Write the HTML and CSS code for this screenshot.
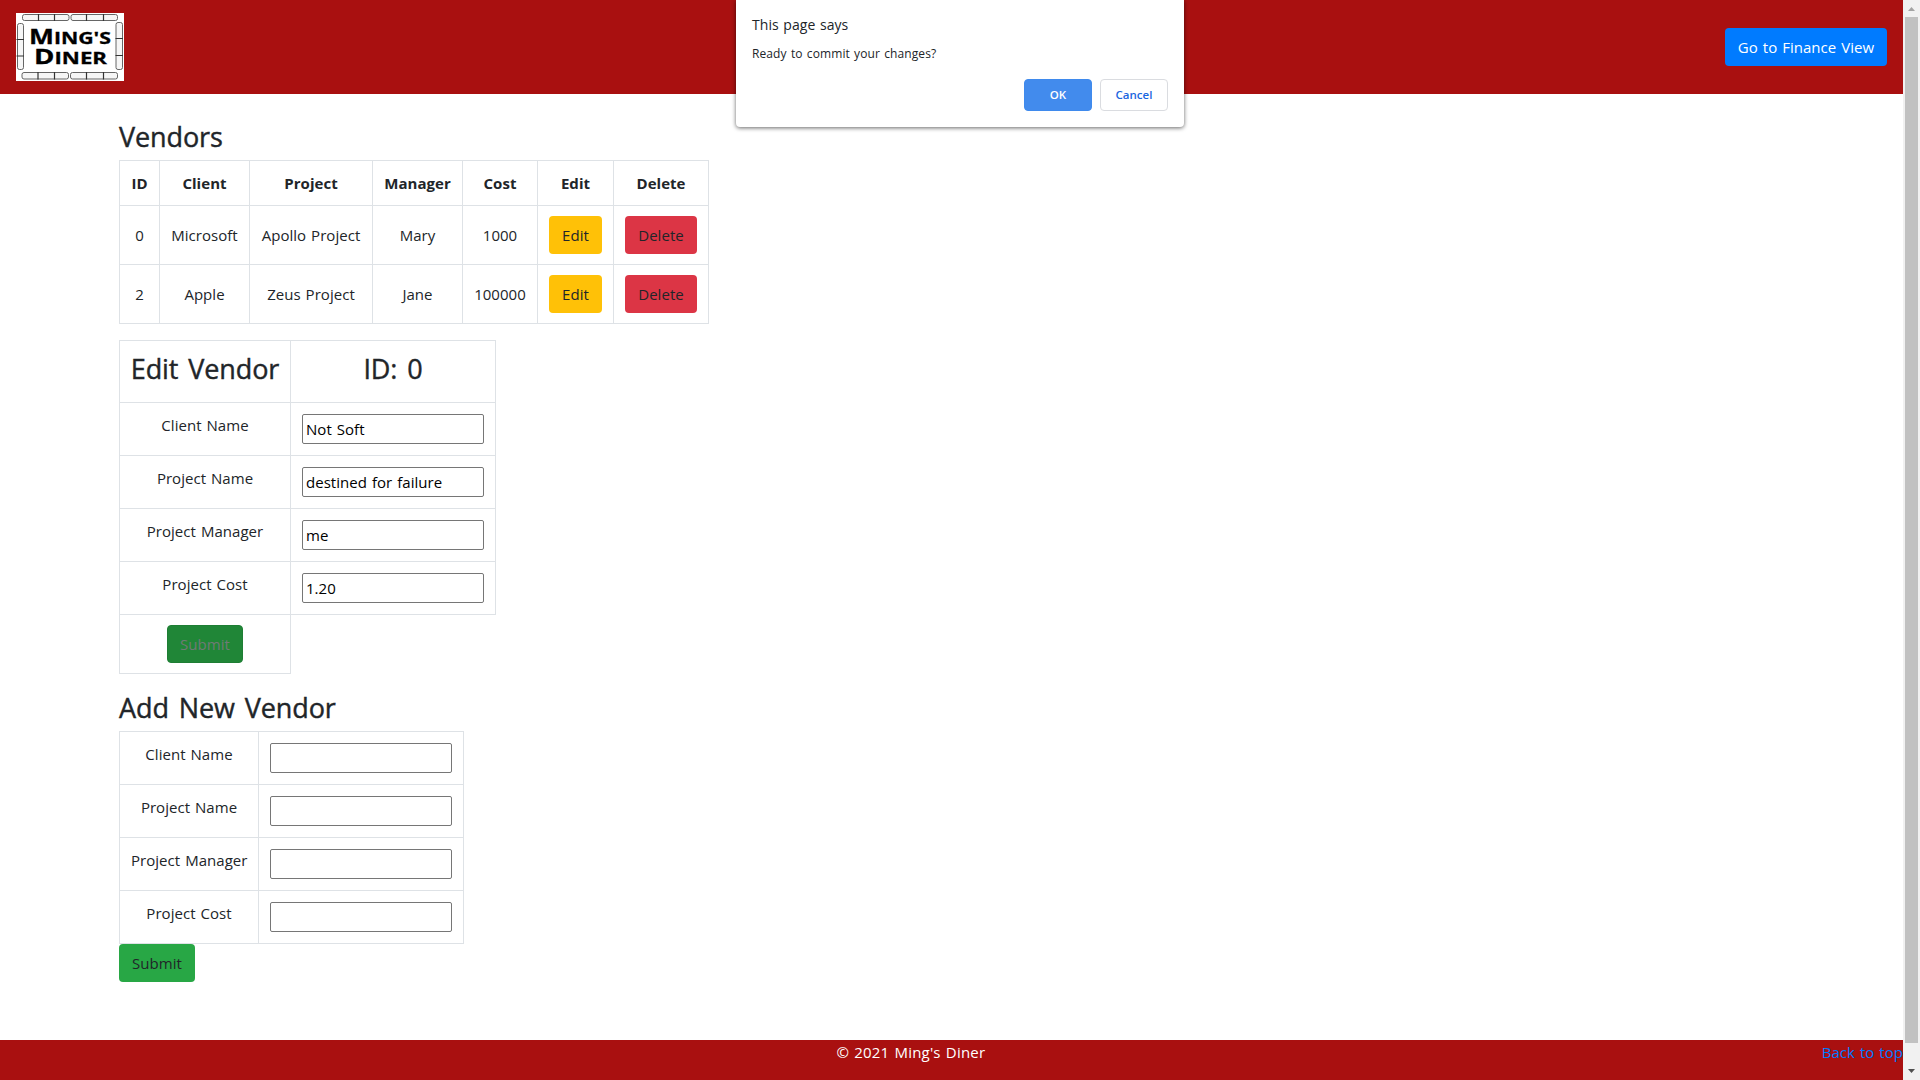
FILE: index.html
```html
<!DOCTYPE html>
<html lang="en">
<head>
<meta charset="utf-8">
<title>Ming's Diner</title>
<link rel="stylesheet" href="styles.css">
</head>
<body>
<div class="window">
  <div class="page">
    <header class="header">
      <svg class="logo" viewBox="0 0 108 68" role="img" aria-label="Ming's Diner">
        <rect width="108" height="68" fill="#fff"/>
        <g fill="#f6f6f6" stroke="#555" stroke-width=".9">
          <rect x="6.500" y="1.500" width="46.500" height="6" rx="2"/><rect x="55" y="1.500" width="46.500" height="6" rx="2"/>
          <rect x="6" y="59.500" width="46.500" height="6.500" rx="2"/><rect x="54.500" y="59.500" width="47" height="6.500" rx="2"/>
          <rect x="1.500" y="10.500" width="6" height="46" rx="2"/><rect x="100" y="9.500" width="6.500" height="47" rx="2"/>
          <path stroke="#333" stroke-width="1.200" d="M22.500 1v7M38.500 1v7M70.500 1v7M87.500 1v7M22 59v7.500M38.500 59v7.500M70.500 59v7.500M87.500 59v7.500M.5 26.500h7.500M.5 43h7.500M99.500 25.500h7.500M99.500 42.500h7.500"/>
        </g>
        <g class="logo-text">
          <text x="13" y="31" textLength="82" lengthAdjust="spacingAndGlyphs"><tspan class="cap">M</tspan>ING'S</text>
          <text x="18" y="51" textLength="73" lengthAdjust="spacingAndGlyphs"><tspan class="cap">D</tspan>INER</text>
        </g>
      </svg>
      <button class="btn btn-primary">Go to Finance View</button>
    </header>

    <main class="content">
      <h2 class="heading">Vendors</h2>
      <table class="table vendors">
        <colgroup><col class="w-id"><col class="w-client"><col class="w-project"><col class="w-client"><col class="w-cost"><col class="w-edit"><col class="w-delete"></colgroup>
        <thead><tr><th>ID</th><th>Client</th><th>Project</th><th>Manager</th><th>Cost</th><th>Edit</th><th>Delete</th></tr></thead>
        <tbody>
          <tr><td>0</td><td>Microsoft</td><td>Apollo Project</td><td>Mary</td><td>1000</td><td><button class="btn btn-warning">Edit</button></td><td><button class="btn btn-danger">Delete</button></td></tr>
          <tr><td>2</td><td>Apple</td><td>Zeus Project</td><td>Jane</td><td>100000</td><td><button class="btn btn-warning">Edit</button></td><td><button class="btn btn-danger">Delete</button></td></tr>
        </tbody>
      </table>

      <table class="table form edit-form">
        <colgroup><col class="w-label-wide"><col class="w-field"></colgroup>
        <tbody>
          <tr class="title-row"><td><h2 class="heading">Edit Vendor</h2></td><td><h2 class="heading">ID: 0</h2></td></tr>
          <tr><td>Client Name</td><td><input class="field" value="Not Soft"></td></tr>
          <tr><td>Project Name</td><td><input class="field" value="destined for failure"></td></tr>
          <tr><td>Project Manager</td><td><input class="field" value="me"></td></tr>
          <tr><td>Project Cost</td><td><input class="field" value="1.20"></td></tr>
          <tr class="submit-row"><td><button class="btn btn-success active">Submit</button></td></tr>
        </tbody>
      </table>

      <h2 class="heading">Add New Vendor</h2>
      <table class="table form add-form">
        <colgroup><col class="w-label"><col class="w-field"></colgroup>
        <tbody>
          <tr><td>Client Name</td><td><input class="field"></td></tr>
          <tr><td>Project Name</td><td><input class="field"></td></tr>
          <tr><td>Project Manager</td><td><input class="field"></td></tr>
          <tr><td>Project Cost</td><td><input class="field"></td></tr>
        </tbody>
      </table>
      <button class="btn btn-success">Submit</button>
    </main>

    <footer class="footer">
      <span class="copyright">© 2021 Ming's Diner</span>
      <a class="top-link" href="#">Back to top</a>
    </footer>
  </div>

  <div class="scrollbar">
    <svg class="arrow" viewBox="0 0 17 17"><path d="M5 11h7L8.500 7z" fill="#a3a3a3"/></svg>
    <div class="thumb"></div>
    <svg class="arrow" viewBox="0 0 17 17"><path d="M5 6h7L8.500 10z" fill="#505050"/></svg>
  </div>
</div>

<div class="dialog" role="dialog">
  <div class="dialog-title">This page says</div>
  <div class="dialog-message">Ready to commit your changes?</div>
  <div class="dialog-actions">
    <button class="dialog-btn dialog-ok">OK</button>
    <button class="dialog-btn dialog-cancel">Cancel</button>
  </div>
</div>
</body>
</html>
```
FILE: styles.css
```css
* { box-sizing: border-box; }

body {
  margin: 0;
  background: #fff;
  color: #212529;
  font: 15px/24px "Open Sans", sans-serif;
  letter-spacing: .04px;
  word-spacing: 1px;
}

button, input { font: inherit; letter-spacing: inherit; word-spacing: inherit; }

.window {
  display: grid;
  grid-template-columns: 1fr 17px;
  height: 1080px;
  overflow: hidden;
}

.page { display: flex; flex-direction: column; }

.header {
  display: flex;
  align-items: center;
  justify-content: space-between;
  height: 94px;
  padding: 0 16px;
  background: #a91010;
}

.logo { display: block; width: 108px; height: 68px; }
.logo-text {
  font: 700 16.5px "Open Sans", sans-serif;
  letter-spacing: 0;
  fill: #000;
  stroke: #000;
  stroke-width: .3px;
}
.logo-text .cap { font-size: 20.5px; }

.btn {
  height: 38px;
  padding: 0 11px;
  border: 1px solid transparent;
  border-radius: 4px;
  color: #212529;
  line-height: 24px;
  white-space: nowrap;
}

.btn-primary { width: 162px; background: #007bff; color: #fff; }
.btn-warning { width: 53px; background: #ffc107; }
.btn-danger { width: 72px; background: #dc3545; }
.btn-success { width: 76px; background: #28a745; }
.btn-success.active { background: #208637; border-color: #1e7e34; color: #6f7a75; }

.content { flex: 1; padding: 26px 0 0 119px; }

.heading {
  margin: 0 0 6px;
  font-size: 27px;
  font-weight: 500;
  line-height: 34px;
  letter-spacing: -.1px;
  word-spacing: 3px;
  -webkit-text-stroke: .4px #212529;
}

.table {
  border-collapse: collapse;
  table-layout: fixed;
}

.table th, .table td {
  height: 53px;
  padding: 11px;
  border: 1px solid #dee2e6;
  text-align: center;
  vertical-align: top;
  white-space: nowrap;
}

.vendors { width: 590px; margin-bottom: 16px; }
.vendors th { height: 45px; padding: 10px 0; font-weight: 700; }
.vendors td { height: 59px; padding: 10px 0; vertical-align: middle; }

.form td:first-child { padding-top: 10px; }
.edit-form { width: 377px; margin-bottom: 17px; }
.edit-form .title-row td { height: 62px; padding: 11px 0 10px; }
.edit-form .submit-row td { height: 59px; padding: 10px 0; }
.add-form { width: 345px; }

.w-id { width: 40px; }
.w-client { width: 90px; }
.w-project { width: 123px; }
.w-cost { width: 75px; }
.w-edit { width: 76px; }
.w-delete { width: 95px; }
.w-label-wide { width: 171px; }
.w-label { width: 139px; }
.w-field { width: 205px; }

.field {
  display: block;
  width: 182px;
  height: 30px;
  padding: 1px 3px;
  border: 1px solid #767676;
  border-radius: 2px;
  background: #fff;
  color: #000;
}

.footer {
  display: flex;
  height: 40px;
  background: #a91010;
  color: #fff;
}

.copyright { flex: 1; text-align: center; letter-spacing: .2px; }
.top-link { color: #007bff; text-decoration: none; }

.scrollbar { display: flex; flex-direction: column; background: #f1f1f1; }
.arrow { display: block; width: 17px; height: 17px; }
.thumb { height: 1026px; margin: 0 2px; background: #c1c1c1; }
.scrollbar .arrow:last-child { margin-top: auto; }

.dialog {
  position: absolute;
  top: 0;
  left: 736px;
  width: 448px;
  height: 127px;
  padding: 13px 16px 16px;
  border-radius: 0 0 4px 4px;
  background: #fff;
  box-shadow: 0 1px 4px rgba(0, 0, 0, .6);
}

.dialog-title { font-size: 14px; line-height: 24px; }
.dialog-message { margin-top: 7px; font-size: 12px; line-height: 20px; letter-spacing: .1px; }
.dialog-actions { display: flex; justify-content: flex-end; gap: 8px; margin-top: 15px; }

.dialog-btn {
  width: 68px;
  height: 32px;
  padding: 0;
  border: 1px solid #dadce0;
  border-radius: 4px;
  background: #fff;
  font-size: 11.5px;
  font-weight: 600;
}

.dialog-ok { border-color: #3f8aed; background: #428bed; color: #fff; }
.dialog-cancel { color: #1a66e0; }
```
